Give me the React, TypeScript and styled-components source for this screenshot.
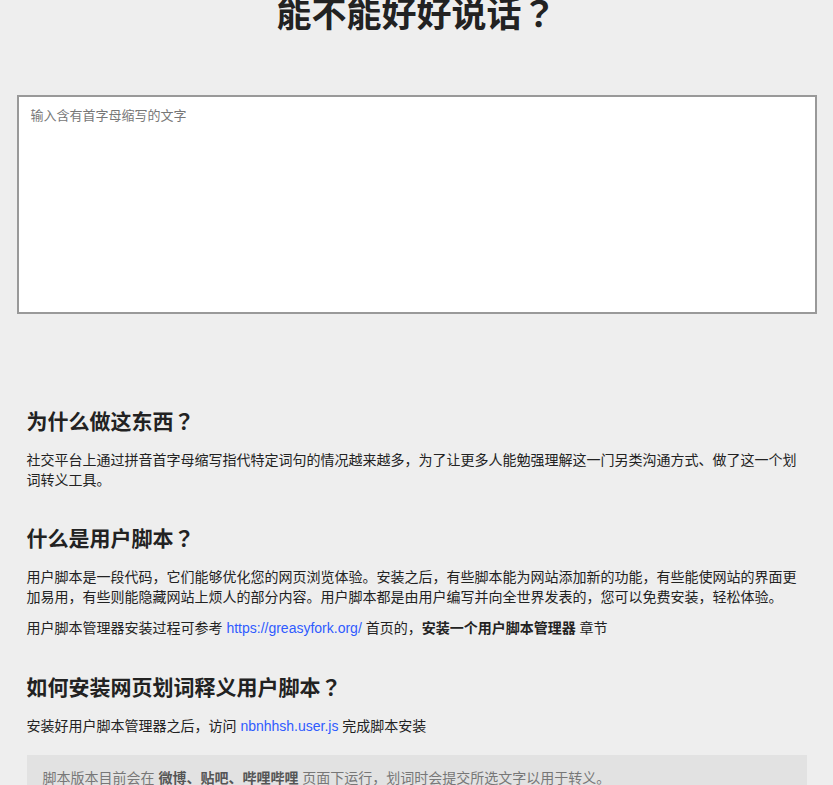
import { createGlobalStyle, styled } from 'styled-components';

const GlobalStyle = createGlobalStyle`
  html, body {
    margin: 0;
    padding: 0;
    background: #eeeeee;
  }
  body {
    font-family: "Liberation Sans", "Noto Sans CJK SC", sans-serif;
    font-size: 14px;
    color: #222;
  }
`;

const headingFont = `"Liberation Sans", "Noto Sans CJK TC", "Noto Sans CJK SC", sans-serif`;

const Page = styled.div`
  max-width: 800px;
  margin: 0 auto;
  overflow: hidden;
`;

const Title = styled.h1`
  margin: -10px 0 55px;
  font-family: ${headingFont};
  font-size: 35px;
  line-height: 50px;
  font-weight: 700;
  text-align: center;
  color: #222;
`;

const Input = styled.textarea`
  display: block;
  box-sizing: border-box;
  width: 100%;
  height: 219px;
  margin: 0;
  padding: 9px 12px;
  border: 2px solid #999;
  background: #fff;
  font-family: inherit;
  font-size: 13px;
  line-height: 20px;
  color: #222;
  resize: none;
  outline: none;

  &::placeholder {
    color: #777;
  }
`;

const Content = styled.div`
  padding: 92px 10px 0;
`;

const Heading = styled.h2`
  margin: 33px 0 14px;
  font-family: ${headingFont};
  font-size: 21px;
  line-height: 31px;
  font-weight: 700;
  color: #222;

  &:first-child {
    margin-top: 0;
  }
`;

const Para = styled.p`
  margin: 12px 0;
  line-height: 19.6px;
`;

const Link = styled.a`
  color: #2f5bff;
  text-decoration: none;
`;

const Note = styled.blockquote`
  margin: 18px 0 0;
  padding: 14px 16px;
  background: #e2e2e2;
  color: #777;
  line-height: 19.6px;

  b {
    color: #555;
  }
`;

function App() {
  return (
    <>
      <GlobalStyle />
      <Page>
        <Title>能不能好好说话？</Title>
        <Input placeholder="输入含有首字母缩写的文字" />
        <Content>
          <Heading>为什么做这东西？</Heading>
          <Para>
            社交平台上通过拼音首字母缩写指代特定词句的情况越来越多，为了让更多人能勉强理解这一门另类沟通方式、做了这一个划词转义工具。
          </Para>

          <Heading>什么是用户脚本？</Heading>
          <Para>
            用户脚本是一段代码，它们能够优化您的网页浏览体验。安装之后，有些脚本能为网站添加新的功能，有些能使网站的界面更加易用，有些则能隐藏网站上烦人的部分内容。用户脚本都是由用户编写并向全世界发表的，您可以免费安装，轻松体验。
          </Para>
          <Para>
            用户脚本管理器安装过程可参考 <Link href="#">https://greasyfork.org/</Link> 首页的，
            <b>安装一个用户脚本管理器</b> 章节
          </Para>

          <Heading>如何安装网页划词释义用户脚本？</Heading>
          <Para>
            安装好用户脚本管理器之后，访问 <Link href="#">nbnhhsh.user.js</Link> 完成脚本安装
          </Para>
          <Note>
            脚本版本目前会在 <b>微博、贴吧、哔哩哔哩</b> 页面下运行，划词时会提交所选文字以用于转义。
          </Note>
        </Content>
      </Page>
    </>
  );
}

export default App;
